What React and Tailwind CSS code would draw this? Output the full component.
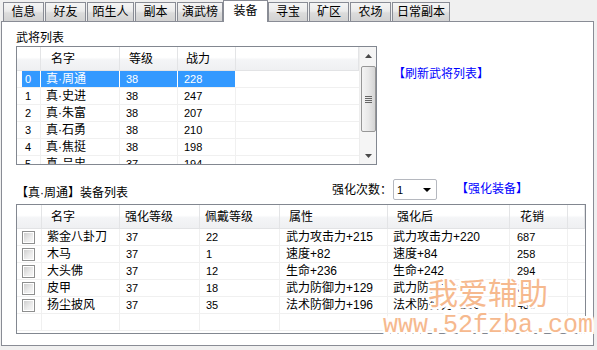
import React from "react";

const F = "font-['Liberation_Sans','Noto_Sans_CJK_SC',sans-serif]";

const tabs = [
  { t: "信息", c: "ml-[3px] w-[41px]" },
  { t: "好友", c: "ml-[1px] w-[41px]" },
  { t: "陌生人", c: "ml-[1px] w-[47px]" },
  { t: "副本", c: "ml-[1px] w-[41px]" },
  { t: "演武榜", c: "ml-[1px] w-[46px]" },
  { t: "装备", c: "ml-0 w-[45px]", sel: true },
  { t: "寻宝", c: "ml-0 w-[40px]" },
  { t: "矿区", c: "ml-[1px] w-[40px]" },
  { t: "农场", c: "ml-[1px] w-[41px]" },
  { t: "日常副本", c: "ml-[1px] w-[58px]" },
];

const heroes = [
  ["0", "真·周通", "38", "228"],
  ["1", "真·史进", "38", "247"],
  ["2", "真·朱富", "38", "207"],
  ["3", "真·石勇", "38", "210"],
  ["4", "真·焦挺", "38", "198"],
  ["5", "真·吕忠", "37", "194"],
];

const equips = [
  ["紫金八卦刀", "37", "22", "武力攻击力+215", "武力攻击力+220", "687"],
  ["木马", "37", "1", "速度+82", "速度+84", "258"],
  ["大头佛", "37", "12", "生命+236", "生命+242", "294"],
  ["皮甲", "37", "18", "武力防御力+129", "武力防御力+133", "347"],
  ["扬尘披风", "37", "35", "法术防御力+196", "法术防御力+200", "438"],
];

const HDR =
  "bg-[linear-gradient(#ffffff,#ffffff_45%,#f4f5f7_55%,#eff0f2)] border-r border-[#e3e4e6] h-full flex items-center";

function Checkbox() {
  return (
    <div className="w-[13px] h-[13px] border border-[#8e8f8f] bg-white p-px">
      <div className="w-full h-full bg-[linear-gradient(135deg,#cfcfcf,#ececec_60%,#f6f6f6)]" />
    </div>
  );
}

function HeroTable() {
  return (
    <div className="w-[361px] h-[119px] border border-[#828790] bg-white flex overflow-hidden">
      <div className="flex-1 flex flex-col overflow-hidden">
        <div className="h-[24px] flex border-b border-[#e2e3e5] shrink-0">
          <div className={`w-[24px] ${HDR}`} />
          <div className={`w-[79px] pl-[10px] ${HDR}`}>名字</div>
          <div className={`w-[58px] pl-[9px] ${HDR}`}>等级</div>
          <div className={`w-[58px] pl-[8px] ${HDR}`}>战力</div>
          <div className={`flex-1 ${HDR}`} />
        </div>
        {heroes.map((r, i) => {
          const sel = i === 0;
          const cell = sel
            ? "bg-[#3399ff] text-white border-r border-white"
            : "border-r border-[#f0f0f0]";
          return (
            <div key={i} className="h-[17px] flex shrink-0 border-b border-[#f0f0f0]">
              <div className={`w-[24px] flex border-r ${sel ? "border-white" : "border-[#f0f0f0]"}`}>
                <div
                  className={`ml-[5px] flex-1 pl-[3px] flex items-center text-[11px] ${
                    sel ? "bg-[#3399ff] text-white" : ""
                  }`}
                >
                  {r[0]}
                </div>
              </div>
              <div className={`w-[79px] pl-[5px] flex items-center ${cell}`}>{r[1]}</div>
              <div className={`w-[58px] pl-[6px] flex items-center text-[11px] ${cell}`}>{r[2]}</div>
              <div className={`w-[58px] pl-[6px] flex items-center text-[11px] ${cell}`}>{r[3]}</div>
              <div className="flex-1" />
            </div>
          );
        })}
      </div>
      <div className="w-[17px] h-full bg-[#f5f5f5] border-l border-[#ededed] flex flex-col items-center shrink-0">
        <div className="h-[17px] w-full flex items-center justify-center">
          <svg width="7" height="4" viewBox="0 0 7 4">
            <path d="M3.5 0 L7 4 L0 4 Z" fill="#4a4a4a" />
          </svg>
        </div>
        <div className="mt-[2px] w-[15px] h-[66px] rounded-[2px] border border-[#979797] bg-[linear-gradient(to_right,#f4f4f4,#e8e8e8_50%,#d4d4d4)] flex flex-col items-center justify-center gap-[1px]">
          <div className="w-[7px] h-px bg-[#666]" />
          <div className="w-[7px] h-px bg-[#666]" />
          <div className="w-[7px] h-px bg-[#666]" />
          <div className="w-[7px] h-px bg-[#666]" />
        </div>
        <div className="flex-1" />
        <div className="h-[17px] w-full flex items-center justify-center">
          <svg width="7" height="4" viewBox="0 0 7 4">
            <path d="M0 0 L7 0 L3.5 4 Z" fill="#4a4a4a" />
          </svg>
        </div>
      </div>
    </div>
  );
}

function EquipTable() {
  const c = "border-r border-[#f0f0f0] flex items-center h-full";
  return (
    <div className="w-[570px] h-[130px] border border-[#828790] bg-white flex flex-col overflow-hidden">
      <div className="h-[24px] flex border-b border-[#e2e3e5] shrink-0">
        <div className={`w-[25px] ${HDR}`} />
        <div className={`w-[78px] pl-[9px] ${HDR}`}>名字</div>
        <div className={`w-[80px] pl-[5px] ${HDR}`}>强化等级</div>
        <div className={`w-[80px] pl-[5px] ${HDR}`}>佩戴等级</div>
        <div className={`w-[108px] pl-[9px] ${HDR}`}>属性</div>
        <div className={`w-[122px] pl-[9px] ${HDR}`}>强化后</div>
        <div className={`w-[58px] pl-[10px] ${HDR}`}>花销</div>
        <div className={`flex-1 ${HDR}`} />
      </div>
      {[...equips, null].map((r, i) => (
        <div key={i} className="h-[17px] flex shrink-0 border-b border-[#f0f0f0]">
          <div className={`w-[25px] pl-[5px] ${c}`}>{r && <Checkbox />}</div>
          <div className={`w-[78px] pl-[5px] ${c}`}>{r && r[0]}</div>
          <div className={`w-[80px] pl-[6px] text-[11px] ${c}`}>{r && r[1]}</div>
          <div className={`w-[80px] pl-[6px] text-[11px] ${c}`}>{r && r[2]}</div>
          <div className={`w-[108px] pl-[6px] ${c}`}>{r && r[3]}</div>
          <div className={`w-[122px] pl-[5px] ${c}`}>{r && r[4]}</div>
          <div className={`w-[58px] pl-[7px] text-[11px] ${c}`}>{r && r[5]}</div>
          <div className="flex-1" />
        </div>
      ))}
    </div>
  );
}

const HALO =
  "[text-shadow:2px_0_0_#fff,-2px_0_0_#fff,0_2px_0_#fff,0_-2px_0_#fff,2px_2px_0_#fff,-2px_-2px_0_#fff,2px_-2px_0_#fff,-2px_2px_0_#fff,0_0_3px_#fff]";

export default function App() {
  return (
    <div className={`relative w-[597px] h-[350px] overflow-hidden bg-[#f0f0f0] text-[12px] leading-[16px] text-black ${F}`}>
      <div className="relative z-10 flex items-end h-[22px]">
        {tabs.map((t) =>
          t.sel ? (
            <div
              key={t.t}
              className={`${t.c} h-[22px] bg-white border-t border-l border-r border-[#898c95] flex items-center justify-center pb-[2px]`}
            >
              {t.t}
            </div>
          ) : (
            <div
              key={t.t}
              className={`${t.c} h-[19px] mb-[1px] border-t border-l border-r border-[#898c95] bg-[linear-gradient(#f5f5f5,#ebebeb_45%,#dcdcdc_55%,#d2d2d2)] flex items-center justify-center`}
            >
              {t.t}
            </div>
          )
        )}
      </div>
      <div className="-mt-px ml-px w-[593px] h-[325px] border border-[#898c95] bg-white pl-[14px] pt-[8px]">
        <div className="h-[16px]">武将列表</div>
        <div className="flex">
          <HeroTable />
          <div className="ml-[16px] mt-[20px] text-[#0000ff]">【刷新武将列表】</div>
        </div>
        <div className="flex h-[39px]">
          <div className="w-[316px] mt-[20px]">【真·周通】装备列表</div>
          <div className="mt-[16px] w-[61px] font-['Noto_Sans_CJK_SC',sans-serif]">强化次数：</div>
          <div className="mt-[14px] w-[44px] h-[21px] border border-[#b5b8bf] rounded-[2px] bg-white flex items-center pl-[3px]">
            <span className="text-[11px] flex-1">1</span>
            <svg width="8" height="4" viewBox="0 0 8 4" className="mr-[5px]">
              <path d="M0 0 L8 0 L4 4 Z" fill="#000" />
            </svg>
          </div>
          <div className="ml-[19px] mt-[16px] text-[#0000ff]">【强化装备】</div>
        </div>
        <EquipTable />
      </div>
      <div className={`absolute left-[428px] top-[276px] text-[30px] leading-[30px] text-[#f6b98e] font-['Noto_Sans_CJK_SC',sans-serif] ${HALO}`}>
        我爱辅助
      </div>
      <div className={`absolute left-[383px] top-[313px] text-[25px] leading-[25px] text-[#f6b98e] font-['Liberation_Mono',monospace] ${HALO}`}>
        www.52fzba.com
      </div>
    </div>
  );
}
